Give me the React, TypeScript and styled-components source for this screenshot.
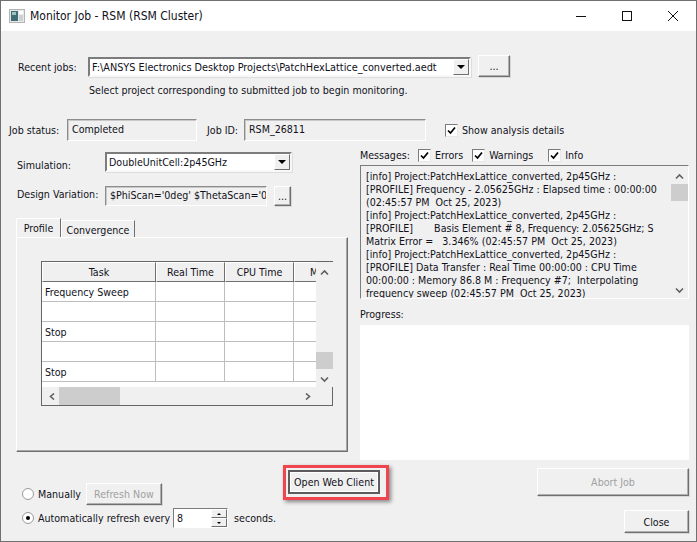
import React from 'react';
import { createGlobalStyle, styled } from 'styled-components';

const GlobalStyle = createGlobalStyle`
html, body {
  margin: 0;
  padding: 0;
  background: #fff;
}
* {
  box-sizing: border-box;
}
body {
  font-family: 'DejaVu Sans Condensed', 'DejaVu Sans', sans-serif;
  font-stretch: condensed;
  font-size: 10.6px;
  color: #10101a;
  white-space: nowrap;
}
`

const Window = styled.div`
width: 697px;
height: 542px;
border: 1px solid #707070;
background: #f0f0f0;
display: flex;
flex-direction: column;
overflow: hidden;
`

const TitleBar = styled.div`
height: 30px;
flex: none;
background: #fff;
display: flex;
align-items: center;
padding-left: 8px;
font-size: 12px;
`

const TitleText = styled.span`
margin-left: 5px;
flex: 1;
`

const Controls = styled.div`
display: flex;
margin-right: 12px;
gap: 24px;
`

const Raised = styled.button<{ $w: number; $h: number; $disabled?: boolean; $ml?: number }>`
width: ${p => p.$w}px;
height: ${p => p.$h}px;
margin-left: ${p => p.$ml ?? 0}px;
flex: none;
padding: 0;
background: #f0f0f0;
font: inherit;
color: ${p => (p.$disabled ? '#a0a0a0' : '#10101a')};
border: 1px solid;
border-color: #fff #6f6f6f #6f6f6f #fff;
box-shadow: inset -1px -1px 0 #b0b0b0, 1px 1px 0 #d8d8d8;
`

const RecentRow = styled.div`
display: flex;
align-items: flex-end;
margin: 24px 0 0 17px;
height: 22px;
`

const RowLabel = styled.label<{ $w: number; $ml?: number; $dy?: number; $pl?: number }>`
width: ${p => p.$w}px;
margin-left: ${p => p.$ml ?? 0}px;
padding-left: ${p => p.$pl ?? 0}px;
flex: none;
align-self: center;
${p => (p.$dy && p.$dy > 0 ? `margin-top: ${p.$dy * 2}px;` : '')}
${p => (p.$dy && p.$dy < 0 ? `margin-bottom: ${-p.$dy * 2}px;` : '')}
`

const Combo = styled.div<{ $w: number; $size?: number }>`
width: ${p => p.$w}px;
height: 20px;
flex: none;
background: #fff;
border: 2px solid;
border-color: #7c7c7c #f8f8f8 #f8f8f8 #7c7c7c;
display: flex;
align-items: center;
padding-left: 2px;
overflow: hidden;
font-size: ${p => p.$size ?? 10.6}px;
box-shadow: 1px 1px 0 #ddd;
`

const ComboText = styled.span`
flex: 1;
overflow: hidden;
`

const ComboArrow = styled.span`
width: 16px;
height: 16px;
flex: none;
background: #f0f0f0;
border: 1px solid;
border-color: #fff #6f6f6f #6f6f6f #fff;
display: flex;
align-items: center;
justify-content: center;
`

const ArrowGlyph = styled.span`
width: 0;
height: 0;
border-left: 4px solid transparent;
border-right: 4px solid transparent;
border-top: 4px solid #000;
`

const Hint = styled.div`
margin: 7px 0 0 88px;
height: 16px;
`

const StatusRow = styled.div`
display: flex;
align-items: center;
margin: 19px 0 0 8px;
height: 22px;
`

const Sunken = styled.div<{ $w: number }>`
width: ${p => p.$w}px;
height: 100%;
flex: none;
border: 1px solid;
border-color: #8c8c8c #fff #fff #8c8c8c;
box-shadow: inset 1px 1px 0 #c8c8c8;
padding: 0 0 2px 4px;
display: flex;
align-items: center;
overflow: hidden;
`

const Check = styled.span`
width: 13px;
height: 13px;
flex: none;
background: #fff;
border: 1px solid;
border-color: #7c7c7c #e8e8e8 #e8e8e8 #7c7c7c;
display: inline-flex;
align-items: center;
justify-content: center;
`

const CheckLabel = styled.span<{ $ml: number }>`
display: inline-flex;
align-items: center;
gap: 4px;
margin-left: ${p => p.$ml}px;
`

const Columns = styled.div`
display: grid;
grid-template-columns: 359px 329px;
margin-top: 5px;
height: 314px;
`

const LeftColumn = styled.div`
display: flex;
flex-direction: column;
padding-left: 15px;
`

const FormRow = styled.div<{ $mt: number }>`
display: flex;
align-items: center;
margin-top: ${p => p.$mt}px;
height: 20px;
`

const Tabs = styled.div`
display: flex;
align-items: flex-end;
margin-top: 12px;
height: 19px;
`

const Tab = styled.div<{ $active?: boolean }>`
height: ${p => (p.$active ? 19 : 17)}px;
width: ${p => (p.$active ? 45 : 74)}px;
display: flex;
align-items: center;
justify-content: center;
padding-top: ${p => (p.$active ? 0 : 1)}px;
border: 1px solid;
border-color: #fff #6f6f6f transparent #fff;
border-bottom: 0;
background: #f0f0f0;
`

const TabPanel = styled.div`
width: 332px;
height: 215px;
border: 1px solid;
border-color: #fff #6f6f6f #6f6f6f #fff;
box-shadow: inset -1px -1px 0 #a8a8a8;
padding: 23px 0 0 24px;
`

const Grid = styled.div`
width: 292px;
height: 145px;
border: 1px solid #666;
display: grid;
grid-template-columns: 274px 17px;
grid-template-rows: 125px 18px;
`

const Cells = styled.div`
background: #fff;
display: grid;
grid-template-columns: 114px 69px 69px 40px;
grid-auto-rows: 20px;
overflow: hidden;
`

const HeadCell = styled.div`
height: 20px;
background: #f0f0f0;
border: 1px solid;
border-color: #fff #6f6f6f #6f6f6f #fff;
display: flex;
align-items: center;
justify-content: center;
overflow: hidden;
`

const Cell = styled.div`
border-right: 1px solid #bdbdbd;
border-bottom: 1px solid #bdbdbd;
padding-left: 3px;
display: flex;
align-items: center;
`

const VScroll = styled.div<{ $thumbTop: number; $thumbHeight: number }>`
display: flex;
flex-direction: column;
align-items: center;
justify-content: space-between;
padding: 7px 0 4px;
background: #f0f0f0;
position: relative;
&::after {
  content: '';
  position: absolute;
  left: 0;
  right: 0;
  top: ${p => p.$thumbTop}px;
  height: ${p => p.$thumbHeight}px;
  background: #cdcdcd;
}
`

const HScroll = styled.div`
display: flex;
align-items: center;
justify-content: space-between;
padding: 0 4px 0 6px;
position: relative;
&::after {
  content: '';
  position: absolute;
  left: 17px;
  width: 61px;
  top: 0;
  bottom: 0;
  background: #cdcdcd;
}
`

const RightColumn = styled.div`
display: flex;
flex-direction: column;
`

const MessageBar = styled.div`
display: flex;
align-items: center;
height: 16px;
margin-top: 1px;
`

const MessageBox = styled.div`
width: 329px;
height: 134px;
margin-top: 2px;
border: 1px solid;
border-color: #7c7c7c #fff #fff #7c7c7c;
display: grid;
grid-template-columns: 1fr 17px;
`

const MessageText = styled.div`
padding: 4px 0 0 5px;
line-height: 13px;
overflow: hidden;
`

const MessageLine = styled.div`
white-space: pre;
`

const ProgressLabel = styled.div`
margin-top: 9px;
height: 16px;
`

const ProgressBox = styled.div`
width: 329px;
height: 135px;
margin-top: 1px;
background: #fff;
`

const Footer = styled.div`
display: flex;
margin-top: 5px;
padding-right: 7px;
`

const RefreshGroup = styled.div`
width: 282px;
padding: 18px 0 0 21px;
display: flex;
flex-direction: column;
gap: 2px;
`

const RadioRow = styled.div`
display: flex;
align-items: center;
height: 22px;
`

const Radio = styled.span<{ $on?: boolean }>`
width: 12px;
height: 12px;
flex: none;
border-radius: 50%;
background: #fff;
border: 1px solid #9a9a9a;
margin-right: 4px;
display: inline-flex;
align-items: center;
justify-content: center;
&::after {
  content: '';
  width: 4px;
  height: 4px;
  border-radius: 50%;
  background: ${p => (p.$on ? '#000' : 'transparent')};
}
`

const Spin = styled.div`
width: 55px;
height: 20px;
margin: 0 6px 0 3px;
flex: none;
background: #fff;
border: 1px solid;
border-color: #7c7c7c #fff #fff #7c7c7c;
display: flex;
align-items: center;
padding-left: 3px;
justify-content: space-between;
`

const SpinButtons = styled.div`
width: 16px;
height: 100%;
display: flex;
flex-direction: column;
`

const SpinButton = styled.span<{ $up?: boolean }>`
flex: 1;
background: #f0f0f0;
border: 1px solid;
border-color: #fff #6f6f6f #6f6f6f #fff;
display: flex;
align-items: center;
justify-content: center;
&::after {
  content: '';
  border-left: 2px solid transparent;
  border-right: 2px solid transparent;
  ${p => (p.$up ? 'border-bottom' : 'border-top')}: 2px solid #000;
}
`

const Callout = styled.div`
width: 106px;
height: 35px;
flex: none;
border: 3px solid #f0444f;
box-shadow: 2px 2px 4px rgba(0, 0, 0, 0.45);
padding: 2px;
`

const WebButton = styled.button`
width: 92px;
height: 24px;
padding: 0;
font: inherit;
background: #f0f0f0;
border: 2px solid #5c5c5c;
outline: 1px solid #fff;
outline-offset: -3px;
color: #10101a;
`

const ActionGroup = styled.div`
margin-left: auto;
display: flex;
flex-direction: column;
align-items: flex-end;
padding-top: 3px;
gap: 14px;
`

const messages = [
  '[info] Project:PatchHexLattice_converted, 2p45GHz :',
  '[PROFILE] Frequency - 2.05625GHz : Elapsed time : 00:00:00',
  '(02:45:57 PM  Oct 25, 2023)',
  '[info] Project:PatchHexLattice_converted, 2p45GHz :',
  '[PROFILE]       Basis Element # 8, Frequency: 2.05625GHz; S',
  'Matrix Error =   3.346% (02:45:57 PM  Oct 25, 2023)',
  '[info] Project:PatchHexLattice_converted, 2p45GHz :',
  '[PROFILE] Data Transfer : Real Time 00:00:00 : CPU Time',
  '00:00:00 : Memory 86.8 M : Frequency #7;  Interpolating',
  'frequency sweep (02:45:57 PM  Oct 25, 2023)',
];

const rows = ['Frequency Sweep', '', 'Stop', '', 'Stop'];

const Tick = () => (
  <svg width="9" height="9" viewBox="0 0 9 9">
    <path d="M1 4.5 L3.5 7 L8 1.5" fill="none" stroke="#000" strokeWidth="1.7" />
  </svg>
);

const Chevron = ({ d }: { d: string }) => (
  <svg width="9" height="7" viewBox="0 0 9 7">
    <path d={d} fill="none" stroke="#606060" strokeWidth="1.6" />
  </svg>
);

const up = 'M1 5.5 L4.5 2 L8 5.5';
const down = 'M1 1.5 L4.5 5 L8 1.5';
const left = 'M6 0.5 L2.5 3.5 L6 6.5';
const right = 'M3 0.5 L6.5 3.5 L3 6.5';

const AppIcon = () => (
  <svg width="16" height="14" viewBox="0 0 16 14">
    <rect x="0.5" y="0.5" width="15" height="13" fill="#e8e8e8" stroke="#b4b4b4" />
    <rect x="2" y="2" width="7" height="10" fill="#3f6f74" />
    <rect x="3" y="3" width="4" height="3" fill="#9fc4c4" />
    <rect x="10" y="2" width="4" height="3" fill="#ffffff" />
    <rect x="10" y="6" width="4" height="6" fill="#c9d3d6" />
  </svg>
);

const WindowControls = () => (
  <Controls>
    <svg width="22" height="14" viewBox="0 0 22 14">
      <path d="M6 7.5 H16" stroke="#111" strokeWidth="1" />
    </svg>
    <svg width="22" height="14" viewBox="0 0 22 14">
      <rect x="6.5" y="2.5" width="9" height="9" fill="none" stroke="#111" />
    </svg>
    <svg width="22" height="14" viewBox="0 0 22 14">
      <path d="M6 2 L16 12 M16 2 L6 12" stroke="#111" strokeWidth="1" />
    </svg>
  </Controls>
);

export default function App() {
  return (
    <Window>
      <GlobalStyle />
      <TitleBar>
        <AppIcon />
        <TitleText>Monitor Job - RSM (RSM Cluster)</TitleText>
        <WindowControls />
      </TitleBar>

      <RecentRow>
        <RowLabel $w={70} $dy={1}>Recent jobs:</RowLabel>
        <Combo $w={383} $size={10.8}>
          <ComboText>F:\ANSYS Electronics Desktop Projects\PatchHexLattice_converted.aedt</ComboText>
          <ComboArrow><ArrowGlyph /></ComboArrow>
        </Combo>
        <Raised $w={32} $h={22} $ml={7}>...</Raised>
      </RecentRow>
      <Hint>Select project corresponding to submitted job to begin monitoring.</Hint>

      <StatusRow>
        <RowLabel $w={58}>Job status:</RowLabel>
        <Sunken $w={130}>Completed</Sunken>
        <RowLabel $w={37} $ml={10}>Job ID:</RowLabel>
        <Sunken $w={182}>RSM_26811</Sunken>
        <CheckLabel $ml={19}><Check><Tick /></Check>Show analysis details</CheckLabel>
      </StatusRow>

      <Columns>
        <LeftColumn>
          <FormRow $mt={6}>
            <RowLabel $w={89} $dy={3} $pl={1}>Simulation:</RowLabel>
            <Combo $w={187}>
              <ComboText>DoubleUnitCell:2p45GHz</ComboText>
              <ComboArrow><ArrowGlyph /></ComboArrow>
            </Combo>
          </FormRow>
          <FormRow $mt={14}>
            <RowLabel $w={89} $dy={-2.5} $pl={1}>Design Variation:</RowLabel>
            <Sunken $w={162}>$PhiScan='0deg' $ThetaScan='0</Sunken>
            <Raised $w={17} $h={20} $ml={7}>...</Raised>
          </FormRow>
          <Tabs>
            <Tab $active>Profile</Tab>
            <Tab>Convergence</Tab>
          </Tabs>
          <TabPanel>
            <Grid>
              <Cells>
                <HeadCell>Task</HeadCell>
                <HeadCell>Real Time</HeadCell>
                <HeadCell>CPU Time</HeadCell>
                <HeadCell>M</HeadCell>
                {rows.map((task, i) => (
                  <React.Fragment key={i}>
                    <Cell>{task}</Cell>
                    <Cell />
                    <Cell />
                    <Cell />
                  </React.Fragment>
                ))}
              </Cells>
              <VScroll $thumbTop={90} $thumbHeight={17}>
                <Chevron d={up} />
                <Chevron d={down} />
              </VScroll>
              <HScroll>
                <Chevron d={left} />
                <Chevron d={right} />
              </HScroll>
            </Grid>
          </TabPanel>
        </LeftColumn>

        <RightColumn>
          <MessageBar>
            Messages:
            <CheckLabel $ml={8}><Check><Tick /></Check>Errors</CheckLabel>
            <CheckLabel $ml={9}><Check><Tick /></Check>Warnings</CheckLabel>
            <CheckLabel $ml={15}><Check><Tick /></Check>Info</CheckLabel>
          </MessageBar>
          <MessageBox>
            <MessageText>
              {messages.map((line, i) => (
                <MessageLine key={i}>{line}</MessageLine>
              ))}
            </MessageText>
            <VScroll $thumbTop={18} $thumbHeight={17}>
              <Chevron d={up} />
              <Chevron d={down} />
            </VScroll>
          </MessageBox>
          <ProgressLabel>Progress:</ProgressLabel>
          <ProgressBox />
        </RightColumn>
      </Columns>

      <Footer>
        <RefreshGroup>
          <RadioRow>
            <Radio />
            Manually
            <Raised $w={76} $h={22} $disabled $ml={5}>Refresh Now</Raised>
          </RadioRow>
          <RadioRow>
            <Radio $on />
            Automatically refresh every
            <Spin>
              8
              <SpinButtons>
                <SpinButton $up />
                <SpinButton />
              </SpinButtons>
            </Spin>
            seconds.
          </RadioRow>
        </RefreshGroup>
        <Callout>
          <WebButton>Open Web Client</WebButton>
        </Callout>
        <ActionGroup>
          <Raised $w={152} $h={28} $disabled>Abort Job</Raised>
          <Raised $w={65} $h={23}>Close</Raised>
        </ActionGroup>
      </Footer>
    </Window>
  );
}
